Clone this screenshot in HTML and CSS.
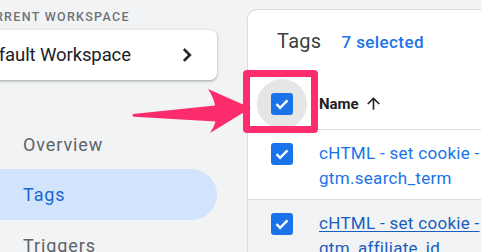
FILE: index.html
```html
<!DOCTYPE html>
<html lang="en">
<head>
<meta charset="utf-8">
<title>Tags</title>
<link rel="stylesheet" href="styles.css">
</head>
<body>
<div class="app">
  <aside class="sidebar">
    <div class="ws-label">CURRENT WORKSPACE</div>
    <div class="ws-card">
      <span class="ws-name">Default Workspace</span>
      <svg class="chevron" viewBox="0 0 24 24" width="26" height="26"><path d="M10 6L8.59 7.41 13.17 12l-4.58 4.59L10 18l6-6z" fill="#202124" stroke="#202124" stroke-width="0.6"/></svg>
    </div>
    <nav class="nav">
      <div class="nav-item">Overview</div>
      <div class="nav-item active">Tags</div>
      <div class="nav-item">Triggers</div>
    </nav>
  </aside>

  <main class="panel">
    <div class="panel-head">
      <span class="title">Tags</span>
      <span class="count">7 selected</span>
    </div>
    <div class="thead">
      <div class="cb-cell head-cb">
        <span class="ripple"></span>
        <span class="cb"><svg viewBox="0 0 22 22" width="22" height="22"><path d="M5.5 11.2l3.6 3.6 7.4-7.4" fill="none" stroke="#fff" stroke-width="2.4"/></svg></span>
      </div>
      <div class="th">Name <svg class="sort" viewBox="0 0 24 24" width="19" height="19"><path d="M4 12l1.41 1.41L11 7.83V20h2V7.83l5.58 5.59L20 12l-8-8-8 8z" fill="#202124"/></svg></div>
    </div>
    <div class="row">
      <div class="cb-cell">
        <span class="cb"><svg viewBox="0 0 22 22" width="22" height="22"><path d="M5.5 11.2l3.6 3.6 7.4-7.4" fill="none" stroke="#fff" stroke-width="2.4"/></svg></span>
      </div>
      <div class="name"><a class="link">cHTML - set cookie - gtm.search_term</a></div>
    </div>
    <div class="row hover">
      <div class="cb-cell">
        <span class="cb"><svg viewBox="0 0 22 22" width="22" height="22"><path d="M5.5 11.2l3.6 3.6 7.4-7.4" fill="none" stroke="#fff" stroke-width="2.4"/></svg></span>
      </div>
      <div class="name"><a class="link underline">cHTML - set cookie - gtm_affiliate_id</a></div>
    </div>
  </main>

  <div class="highlight"></div>
  <svg class="arrow" viewBox="0 0 481 252" width="481" height="252">
    <path d="M133 114 L215 105.5 Q213.5 97 208 89 L251 108 L210 133 Q214 127.5 215.5 121.5 L134 116.8 Q131.5 115.5 133 114 Z" fill="#fd2c6c"/>
  </svg>
</div>
</body>
</html>
```

FILE: styles.css
```css
* { box-sizing: border-box; }

html, body {
  margin: 0;
  padding: 0;
  width: 481px;
  height: 252px;
  overflow: hidden;
  background: #f1f3f4;
  font-family: Roboto, "Noto Sans", Arial, sans-serif;
}

.app {
  position: relative;
  display: flex;
  align-items: flex-start;
  width: 481px;
  height: 252px;
  overflow: hidden;
}

.sidebar {
  flex: 0 0 257px;
  width: 257px;
  margin-left: -40px;
  display: flex;
  flex-direction: column;
}

.ws-label {
  margin-top: 9px;
  padding-left: 16px;
  font-size: 12.5px;
  line-height: 16px;
  font-weight: 500;
  letter-spacing: 1.3px;
  color: #6f7378;
  white-space: nowrap;
}

.ws-card {
  margin-top: 5px;
  height: 50px;
  background: #fff;
  border-radius: 0 7px 7px 0;
  box-shadow: 0 1px 2px rgba(60, 64, 67, 0.3), 0 1px 3px 1px rgba(60, 64, 67, 0.12);
  display: flex;
  align-items: center;
  justify-content: space-between;
  padding: 0 17px 0 17px;
}

.ws-name {
  font-size: 18.5px;
  color: #202124;
  letter-spacing: -0.1px;
  white-space: nowrap;
}

.chevron { display: block; }

.nav {
  margin-top: 39px;
  display: flex;
  flex-direction: column;
}

.nav-item {
  height: 50px;
  display: flex;
  align-items: center;
  padding-left: 63px;
  font-size: 18px;
  color: #5f6368;
  letter-spacing: 0.9px;
}

.nav-item.active {
  height: 51px;
  background: #d2e3fc;
  color: #1967d2;
  border-radius: 0 26px 26px 0;
}

.panel {
  flex: 0 0 420px;
  margin-left: 30px;
  margin-top: 9px;
  height: 260px;
  background: #fff;
  border-left: 1px solid #dadce0;
  border-top: 1px solid #dadce0;
  border-top-left-radius: 10px;
}

.panel-head {
  height: 69px;
  padding: 19px 0 0 29px;
  display: flex;
  align-items: baseline;
  gap: 20px;
}

.title {
  font-size: 20px;
  line-height: 24px;
  color: #3c4043;
  letter-spacing: 0.3px;
}

.count {
  font-size: 17px;
  line-height: 24px;
  font-weight: 500;
  color: #1a73e8;
  letter-spacing: 0.4px;
}

.thead {
  height: 51px;
  display: flex;
  align-items: center;
  border-bottom: 1px solid #dadce0;
}

.cb-cell {
  position: relative;
  flex: 0 0 71px;
  width: 71px;
  padding-left: 23px;
}

.head-cb {
  height: 50px;
  display: flex;
  align-items: center;
}

.ripple {
  position: absolute;
  left: 9px;
  top: 0;
  width: 50px;
  height: 50px;
  border-radius: 50%;
  background: #e6e6e6;
}

.cb {
  position: relative;
  display: block;
  width: 22px;
  height: 22px;
  border-radius: 3px;
  background: #1a73e8;
}

.cb svg { display: block; }

.th {
  display: flex;
  align-items: center;
  gap: 5px;
  font-size: 15px;
  font-weight: 700;
  color: #202124;
}

.sort { display: block; margin-top: -1px; }

.row {
  display: flex;
  align-items: flex-start;
  border-bottom: 1px solid #dadce0;
}

.row .cb-cell { padding-top: 13px; }

.row.hover { background: #f1f3f4; }

.name {
  width: 200px;
  padding: 11px 0 8px;
  font-size: 17px;
  line-height: 25px;
}

.link {
  color: #1a73e8;
  letter-spacing: 0.3px;
}

.link.underline {
  color: #1a5dc0;
  text-decoration: underline;
  text-underline-offset: 2px;
}

.highlight {
  position: absolute;
  left: 243px;
  top: 70px;
  width: 75px;
  height: 63px;
  border: 7px solid #fd2c6c;
  border-radius: 4px;
}

.arrow {
  position: absolute;
  left: 0;
  top: 0;
  pointer-events: none;
}
```
